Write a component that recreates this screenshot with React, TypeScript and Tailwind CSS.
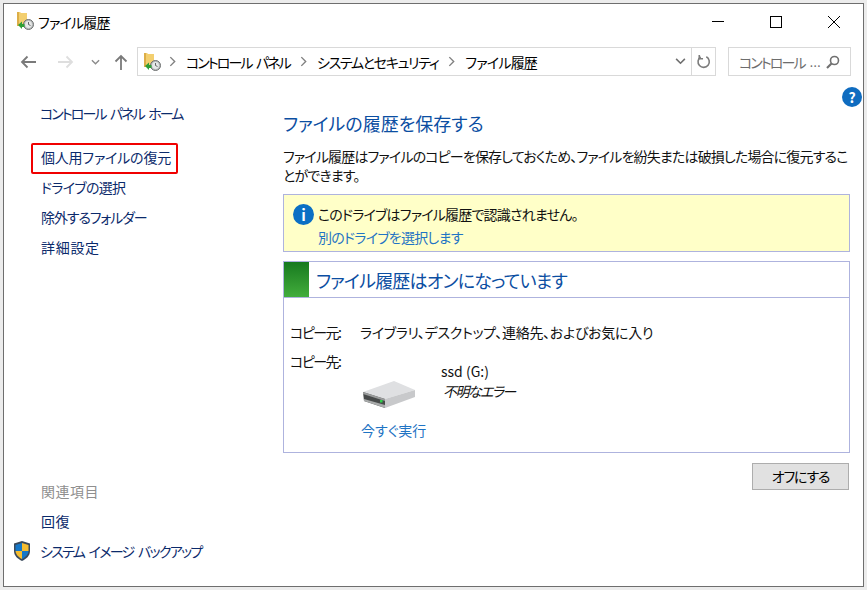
// App.tsx
function HistoryIcon({ className }: { className?: string }) {
  return (
    <svg viewBox="0 0 18 20" className={className}>
      <path d="M1 1h3l1 1h6v12H1z" fill="#f3cf6f" />
      <path d="M1 1h2v14H1z" fill="#dcae48" />
      <circle cx="12.5" cy="13.5" r="5" fill="#b9bcbc" stroke="#6d7070" strokeWidth="1" />
      <circle cx="12.5" cy="13.5" r="3.4" fill="#e6e8e8" />
      <path d="M12.5 11v2.5l2 1" stroke="#444" strokeWidth="0.8" fill="none" />
      <path d="M2 14l4-3.5V13h2.5v3H6v2z" fill="#2f9e35" />
    </svg>
  );
}

function Chevron({ className }: { className: string }) {
  return (
    <svg viewBox="0 0 8 12" className={className}>
      <path d="M1.5 1l5 5-5 5" stroke="#808080" strokeWidth="1.6" fill="none" />
    </svg>
  );
}

function DriveIcon() {
  return (
    <svg viewBox="0 0 52 27" className="w-[52px] h-[27px]">
      <path d="M0 11L31 0l21 9-30 9z" fill="#dfe0e2" />
      <path d="M22 18l30-9v7L22 27z" fill="#c8c9cb" />
      <path d="M0 11l22 7v9L1 20z" fill="#474a4a" />
      <path d="M0 11l22 7v2L0 13z" fill="#9a9c9c" />
      <path d="M1 20l21 7v-3L1 18z" fill="#a9abab" />
      <rect x="17" y="19" width="2.500" height="2.500" fill="#2fd04a" />
    </svg>
  );
}

export default function App() {
  return (
    <div className='w-[867px] h-[590px] bg-[#ececec] p-[3px] overflow-hidden text-[14px] leading-none text-[#111] font-["Noto_Sans_CJK_JP","Liberation_Sans",sans-serif] [font-feature-settings:"palt"]'>
      <div className="h-full border border-[#6e6e6e] bg-white flex flex-col">
        {/* Title bar */}
        <div className="h-[35px] flex items-center pl-[12px] shrink-0">
          <HistoryIcon className="w-[18px] h-[20px] mt-[-1px]" />
          <span className="ml-[4px] text-black tracking-[-0.8px]">ファイル履歴</span>
          <div className="ml-auto flex items-center text-black">
            <div className="w-[58px] flex justify-center">
              <div className="w-[12px] h-px bg-black" />
            </div>
            <div className="w-[58px] flex justify-center">
              <div className="w-[12px] h-[12px] border border-black" />
            </div>
            <svg viewBox="0 0 12 12" className="w-[12px] h-[12px] ml-[23px] mr-[23px]">
              <path d="M0 0l12 12M12 0L0 12" stroke="#000" strokeWidth="1" />
            </svg>
          </div>
        </div>

        {/* Address bar */}
        <div className="h-[29px] mt-[8px] flex items-center shrink-0">
          <svg viewBox="0 0 16 14" className="w-[16px] h-[14px] ml-[16px]">
            <path d="M16 7H2M7.5 1.5L2 7l5.5 5.5" stroke="#7a7a7a" strokeWidth="1.8" fill="none" />
          </svg>
          <svg viewBox="0 0 16 14" className="w-[16px] h-[14px] ml-[22px]">
            <path d="M0 7h14M8.5 1.5L14 7l-5.500 5.500" stroke="#dedede" strokeWidth="1.8" fill="none" />
          </svg>
          <svg viewBox="0 0 10 6" className="w-[9px] h-[6px] ml-[17px]">
            <path d="M1 1l4 4 4-4" stroke="#8a8a8a" strokeWidth="1.500" fill="none" />
          </svg>
          <svg viewBox="0 0 14 16" className="w-[14px] h-[16px] ml-[14px]">
            <path d="M7 16V2M1.500 7.500L7 2l5.500 5.500" stroke="#7a7a7a" strokeWidth="1.800" fill="none" />
          </svg>
          <div className="w-[579px] h-[29px] ml-[9px] border border-[#d9d9d9] flex items-center">
            <HistoryIcon className="w-[18px] h-[20px] ml-[5px]" />
            <div className="flex items-center text-black">
              <Chevron className="w-[7px] h-[11px] ml-[8px] mr-[10px]" />
              <span className="tracking-[-1.9px] [word-spacing:3px]">コントロール パネル</span>
              <Chevron className="w-[7px] h-[11px] mx-[10px]" />
              <span className="tracking-[-1.3px]">システムとセキュリティ</span>
              <Chevron className="w-[7px] h-[11px] mx-[10px]" />
              <span className="tracking-[-0.8px]">ファイル履歴</span>
            </div>
            <div className="ml-auto flex items-center h-full">
              <svg viewBox="0 0 12 8" className="w-[11px] h-[7px] mr-[5px]">
                <path d="M1 1l5 5 5-5" stroke="#6f6f6f" strokeWidth="1.800" fill="none" />
              </svg>
              <div className="w-[24px] h-full border-l border-[#d9d9d9] flex items-center justify-center">
                <svg viewBox="0 0 16 16" className="w-[15px] h-[15px]">
                  <path d="M5 3.200a6 6 0 1 0 6-.200" stroke="#7c7c7c" strokeWidth="1.700" fill="none" />
                  <path d="M3.500 1v4h4" stroke="#7c7c7c" strokeWidth="1.700" fill="none" />
                </svg>
              </div>
            </div>
          </div>
          <div className="w-[123px] h-[29px] ml-[12px] border border-[#d9d9d9] flex items-center pl-[10px] text-[#6d6d6d] whitespace-nowrap">
            <span className="tracking-[-1.9px]">コントロール</span>
            <span className="ml-[5px] text-[12px] tracking-[0.5px]">...</span>
            <svg viewBox="0 0 14 14" className="w-[14px] h-[14px] ml-auto mr-[10px]">
              <circle cx="8.500" cy="5.500" r="4" stroke="#707070" strokeWidth="1.600" fill="none" />
              <path d="M5.500 8.500L1 13" stroke="#707070" strokeWidth="2.200" />
            </svg>
          </div>
        </div>

        {/* Body */}
        <div className="flex flex-1 min-h-0 relative">
          <div className="absolute right-[1px] top-[11px] w-[20px] h-[20px] rounded-full bg-[#0f6cc0] text-white font-bold flex items-center justify-center">
            ?
          </div>

          {/* Left side */}
          <div className="w-[279px] shrink-0 flex flex-col text-[#0b2a6b] relative">
            <div className="ml-[36px] mt-[28px] leading-[18px] tracking-[-1.9px] [word-spacing:3px]">コントロール パネル ホーム</div>
            <div className="ml-[27px] mt-[21px] w-[147px] h-[31px] border-2 border-[#f00000] rounded-[2px] flex items-center pl-[8px] pb-[3px] whitespace-nowrap tracking-[-0.2px]">
              個人用ファイルの復元
            </div>
            <div className="ml-[37px] mt-[4px] leading-[18px] tracking-[-0.7px]">ドライブの選択</div>
            <div className="ml-[37px] mt-[12px] leading-[18px] tracking-[-1.1px]">除外するフォルダー</div>
            <div className="ml-[37px] mt-[12px] leading-[18px] tracking-[0.7px]">詳細設定</div>
            <div className="mt-auto mb-[25px] flex flex-col">
              <div className="ml-[37px] leading-[18px] text-[#8f8f8f] tracking-[0.5px]">関連項目</div>
              <div className="ml-[37px] mt-[12px] leading-[18px] tracking-[0.5px]">回復</div>
              <div className="ml-[9px] mt-[11px] flex items-center leading-[18px]">
                <svg viewBox="0 0 18 20" className="w-[18px] h-[20px]">
                  <path d="M9 0l8 2.500V10c0 5-4 8-8 10-4-2-8-5-8-10V2.500z" fill="#3a4a5c" />
                  <path d="M9 2L2.500 4v6H9z" fill="#1577c8" />
                  <path d="M9 2l6.500 2v6H9z" fill="#f6bd2f" />
                  <path d="M2.500 10H9v8c-3-1.500-6-4-6.500-8z" fill="#f6bd2f" />
                  <path d="M15.500 10H9v8c3-1.500 6-4 6.500-8z" fill="#1577c8" />
                </svg>
                <span className="ml-[9px] tracking-[-1.7px] [word-spacing:3px]">システム イメージ バックアップ</span>
              </div>
            </div>
          </div>

          {/* Main */}
          <div className="w-[567px] flex flex-col">
            <div className="mt-[35px] text-[18px] leading-[24px] text-[#0b4ea2]">ファイルの履歴を保存する</div>
            <p className="mt-[12px] leading-[19px] text-[#111] whitespace-nowrap tracking-[-0.85px]">
              ファイル履歴はファイルのコピーを保存しておくため、ファイルを紛失または破損した場合に復元するこ
              <br />
              とができます。
            </p>
            <div className="mt-[9px] h-[58px] border border-[#aeb3de] bg-[#ffffc8] flex">
              <div className="w-[21px] h-[21px] ml-[9px] mt-[9px] rounded-full bg-[#0b6fc4] text-white text-[15px] font-bold flex items-center justify-center shrink-0">
                i
              </div>
              <div className="ml-[4px] flex flex-col">
                <div className="mt-[10px] leading-[18px] tracking-[-0.8px]">このドライブはファイル履歴で認識されません。</div>
                <div className="mt-[5px] leading-[18px] text-[#1f74c4] tracking-[-0.75px]">別のドライブを選択します</div>
              </div>
            </div>
            <div className="mt-[9px] h-[192px] border border-[#aeb3de] flex flex-col">
              <div className="h-[36px] flex border-b border-[#aeb3de] shrink-0">
                <div className="w-[25px] bg-gradient-to-b from-[#157a1f] to-[#42ad3c]" />
                <div className="ml-[7px] self-center text-[18px] leading-[24px] text-[#0b4ea2] tracking-[-0.8px]">ファイル履歴はオンになっています</div>
              </div>
              <div className="mt-[25px] ml-[6px] flex leading-[18px]">
                <span className="w-[70px] tracking-[-1.5px]">コピー元:</span>
                <span className="tracking-[-0.3px]">ライブラリ、デスクトップ、連絡先、およびお気に入り</span>
              </div>
              <div className="mt-[11px] ml-[6px] flex">
                <span className="w-[71px] leading-[18px] tracking-[-1.5px]">コピー先:</span>
                <div className="flex flex-col w-[80px]">
                  <div className="mt-[29px] ml-[2px]"><DriveIcon /></div>
                  <span className="mt-[13px] leading-[18px] text-[#1f74c4] whitespace-nowrap">今すぐ実行</span>
                </div>
                <div className="mt-[10px] flex flex-col">
                  <span className="leading-[18px]">ssd (G:)</span>
                  <span className="mt-[2px] ml-[2px] leading-[18px] italic tracking-[-1.6px]">不明なエラー</span>
                </div>
              </div>
            </div>
            <div className="mt-[10px] self-end mr-[1px] w-[97px] h-[27px] border border-[#adadad] bg-[#e1e1e1] flex items-center justify-center pb-[2px] text-black tracking-[-1.2px]">
              オフにする
            </div>
          </div>
        </div>
      </div>
    </div>
  );
}
